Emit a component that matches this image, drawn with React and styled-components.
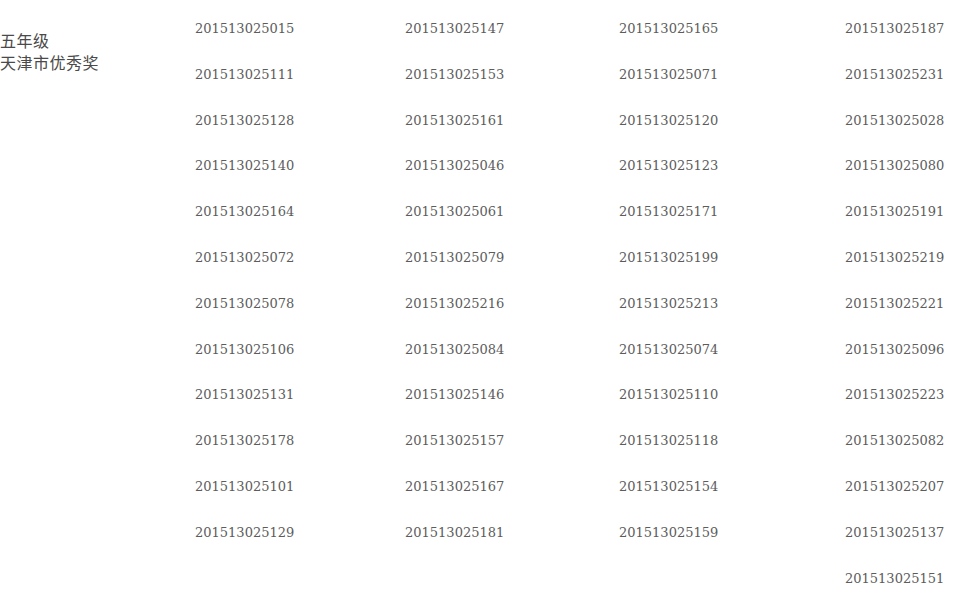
import React from "react";
import styled, { createGlobalStyle } from "styled-components";

const GlobalStyle = createGlobalStyle`
  html, body {
    margin: 0;
    padding: 0;
    background: #ffffff;
  }
  body {
    width: 958px;
    height: 600px;
    overflow: hidden;
  }
`;

const Page = styled.div`
  display: grid;
  grid-template-columns: 195px 210px 214px 226px 1fr;
  padding-top: 6px;
  color: #5a5a5a;
`;

const Award = styled.div`
  padding-top: 23px;
  font-family: "Noto Sans CJK SC", "DejaVu Sans", sans-serif;
  font-size: 16px;
  line-height: 22px;
  color: #4a4a4a;
  letter-spacing: 0.5px;
`;

const Column = styled.ul`
  list-style: none;
  margin: 0;
  padding: 0;
  display: flex;
  flex-direction: column;
`;

const Number = styled.li`
  height: 45.8px;
  line-height: 45.8px;
  font-family: "DejaVu Serif", "Liberation Serif", serif;
  font-size: 13px;
  color: #5c5c5c;
  white-space: nowrap;
`;

const columns = [
  [
    "201513025015", "201513025111", "201513025128", "201513025140",
    "201513025164", "201513025072", "201513025078", "201513025106",
    "201513025131", "201513025178", "201513025101", "201513025129",
  ],
  [
    "201513025147", "201513025153", "201513025161", "201513025046",
    "201513025061", "201513025079", "201513025216", "201513025084",
    "201513025146", "201513025157", "201513025167", "201513025181",
  ],
  [
    "201513025165", "201513025071", "201513025120", "201513025123",
    "201513025171", "201513025199", "201513025213", "201513025074",
    "201513025110", "201513025118", "201513025154", "201513025159",
  ],
  [
    "201513025187", "201513025231", "201513025028", "201513025080",
    "201513025191", "201513025219", "201513025221", "201513025096",
    "201513025223", "201513025082", "201513025207", "201513025137",
    "201513025151",
  ],
];

const App = () => (
  <>
    <GlobalStyle />
    <Page>
      <Award>
        五年级
        <br />
        天津市优秀奖
      </Award>
      {columns.map((col, i) => (
        <Column key={i}>
          {col.map((n) => (
            <Number key={n}>{n}</Number>
          ))}
        </Column>
      ))}
    </Page>
  </>
);

export default App;
